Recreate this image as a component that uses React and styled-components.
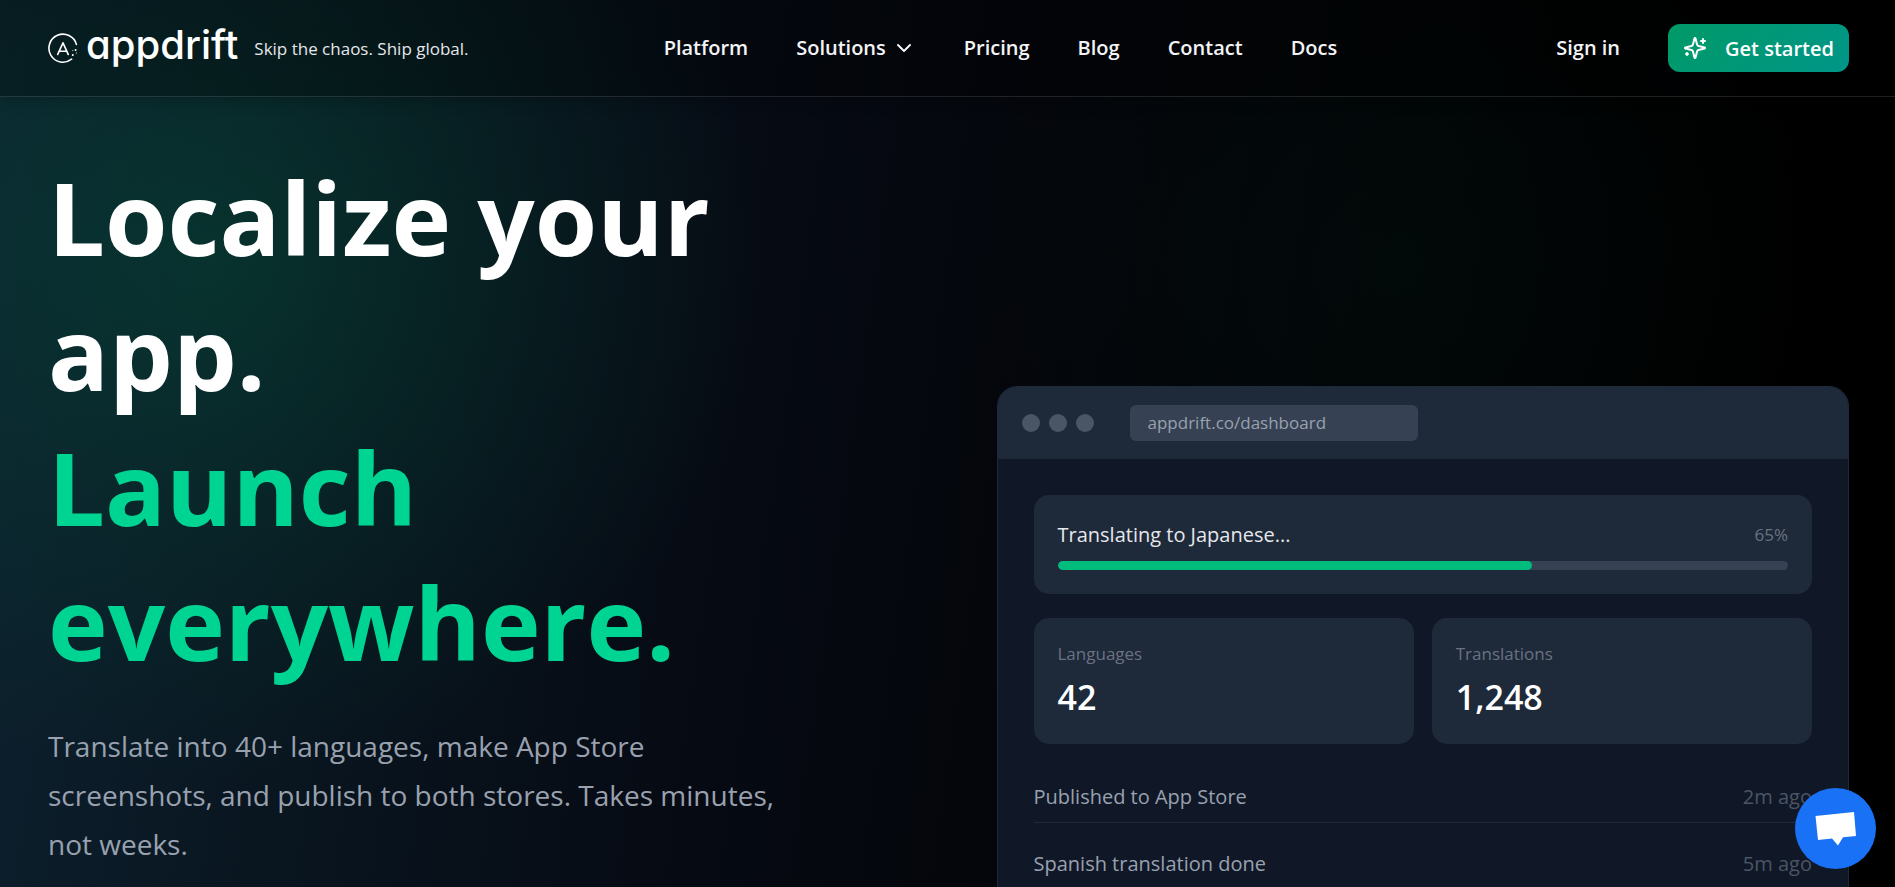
import React from "react";
import styled, { createGlobalStyle } from "styled-components";
import { ChevronDown } from "lucide-react";

const navItems = [
  { label: "Platform" },
  { label: "Solutions", menu: true },
  { label: "Pricing" },
  { label: "Blog" },
  { label: "Contact" },
  { label: "Docs" }
];

const stats = [
  { label: "Languages", value: "42" },
  { label: "Translations", value: "1,248" }
];

const activity = [
  { text: "Published to App Store", time: "2m ago" },
  { text: "Spanish translation done", time: "5m ago" }
];

const progress = 65;

const LogoMark = () => (
  <svg width="30" height="32" viewBox="0 0 30 32" fill="none" stroke="#fff" strokeLinecap="round" aria-hidden="true">
    <path d="M28.4 12.4 A14 14 0 1 0 23.6 27.2" strokeWidth="1.6" />
    <path d="M9.7 22.4 L15 10.8 L20.2 22.4 M11.6 19.2 H18" strokeWidth="1.6" strokeLinejoin="round" />
    <path d="M27.6 18 v0.1 M24.8 23 v0.1" strokeWidth="2" />
    <path d="M24.8 18.6 v0.1 M28.4 21 v0.1" strokeWidth="1" />
  </svg>
);

const SparkIcon = () => (
  <svg
    width="24"
    height="24"
    viewBox="0 0 24 24"
    fill="none"
    stroke="currentColor"
    strokeWidth="2"
    strokeLinecap="round"
    strokeLinejoin="round"
    aria-hidden="true"
  >
    <path d="M9.937 15.5A2 2 0 0 0 8.5 14.063l-6.135-1.582a.5.5 0 0 1 0-.962L8.5 9.936A2 2 0 0 0 9.937 8.5l1.582-6.135a.5.5 0 0 1 .963 0L14.063 8.5A2 2 0 0 0 15.5 9.937l6.135 1.581a.5.5 0 0 1 0 .964L15.5 14.063a2 2 0 0 0-1.437 1.437l-1.582 6.135a.5.5 0 0 1-.963 0z" />
    <path d="M20 3v4 M22 5h-4 M4 17v2 M5 18H3" />
  </svg>
);

const App = () => (
  <>
    <GlobalStyle />
    <Page>
      <Header>
        <Brand href="#">
          <LogoMark />
          <Wordmark>appdrift</Wordmark>
          <Tagline>Skip the chaos. Ship global.</Tagline>
        </Brand>
        <Nav aria-label="Main">
          {navItems.map(item =>
            item.menu ? (
              <NavButton key={item.label} type="button">
                {item.label}
                <ChevronDown size={24} strokeWidth={2} aria-hidden="true" />
              </NavButton>
            ) : (
              <NavLink key={item.label} href="#">
                {item.label}
              </NavLink>
            )
          )}
        </Nav>
        <Actions>
          <NavLink href="#">Sign in</NavLink>
          <StartButton type="button">
            <SparkIcon />
            Get started
          </StartButton>
        </Actions>
      </Header>

      <Hero>
        <Intro>
          <Title>
            Localize your app. <Accent>Launch everywhere.</Accent>
          </Title>
          <Lead>
            Translate into 40+ languages, make App Store screenshots, and publish to both stores. Takes minutes, not
            weeks.
          </Lead>
        </Intro>

        <Window>
          <WindowBar>
            <Dots>
              <Dot />
              <Dot />
              <Dot />
            </Dots>
            <Address>appdrift.co/dashboard</Address>
          </WindowBar>
          <WindowBody>
            <Panel>
              <PanelHead>
                <Task>Translating to Japanese...</Task>
                <Muted>{progress}%</Muted>
              </PanelHead>
              <Track>
                <Fill style={{ width: `${progress}%` }} />
              </Track>
            </Panel>
            <Stats>
              {stats.map(stat => (
                <Panel key={stat.label}>
                  <Muted>{stat.label}</Muted>
                  <Value>{stat.value}</Value>
                </Panel>
              ))}
            </Stats>
            <Activity>
              {activity.map(item => (
                <ActivityRow key={item.text}>
                  <span>{item.text}</span>
                  <Time>{item.time}</Time>
                </ActivityRow>
              ))}
            </Activity>
          </WindowBody>
        </Window>
      </Hero>

      <ChatButton type="button" aria-label="Open chat">
        <svg width="42" height="36" viewBox="0 0 42 36" fill="#fff" aria-hidden="true">
          <path d="M0.5 5 L39 1 L41 25 L28 26.2 L23 34.5 L17 27.6 L3 29 Z" />
        </svg>
      </ChatButton>
    </Page>
  </>
);

export default App;

const GlobalStyle = createGlobalStyle`
  *, *::before, *::after {
    box-sizing: border-box;
  }

  body {
    margin: 0;
    background: #000;
    color: #fff;
    font-family: "Segoe UI", "Open Sans", "Noto Sans", sans-serif;
  }

  a, button {
    color: inherit;
    font-family: inherit;
    text-decoration: none;
  }

  button {
    border: 0;
    cursor: pointer;
  }
`;

const Page = styled.div`
  height: 100vh;
  overflow: hidden;
  background:
    radial-gradient(ellipse 560px 520px at 210px 260px, rgba(4, 78, 56, 0.48), rgba(4, 78, 56, 0.2) 55%, transparent),
    radial-gradient(ellipse 420px 400px at 74% 30%, rgba(0, 60, 40, 0.1), transparent),
    linear-gradient(98deg, #0d2230 0%, #09151f 20%, #060a13 40%, #04060b 54%, #010203 78%, #000 92%);
`;

const Header = styled.header`
  display: flex;
  align-items: center;
  justify-content: space-between;
  height: 97px;
  padding: 0 46px 0 48px;
  border-bottom: 1px solid rgba(255, 255, 255, 0.12);
  background: rgba(0, 0, 0, 0.3);
  box-shadow: 0 4px 12px rgba(0, 0, 0, 0.2);
`;

const Brand = styled.a`
  display: flex;
  align-items: center;
  gap: 8px;
`;

const Wordmark = styled.span`
  padding-bottom: 6px;
  font-family: Inter, Lato, sans-serif;
  font-feature-settings: "cv11";
  font-size: 40px;
  font-weight: 500;
  line-height: 48px;
`;

const Tagline = styled.span`
  margin-left: 8px;
  color: #e5e7eb;
  font-size: 17px;
`;

const Nav = styled.nav`
  display: flex;
  align-items: center;
  gap: 48px;
  margin-right: 24px;
`;

const NavLink = styled.a`
  color: #f3f4f6;
  font-size: 20px;
  font-weight: 600;
  line-height: 28px;
`;

const NavButton = styled.button`
  display: flex;
  align-items: center;
  gap: 6px;
  padding: 0;
  background: none;
  color: #f3f4f6;
  font-size: 20px;
  font-weight: 600;
  line-height: 28px;
`;

const Actions = styled.div`
  display: flex;
  align-items: center;
  gap: 48px;
`;

const StartButton = styled.button`
  display: flex;
  align-items: center;
  gap: 18px;
  height: 48px;
  padding: 0 15px;
  border-radius: 12px;
  background: linear-gradient(135deg, #009966, #009689);
  font-size: 20px;
  font-weight: 600;
`;

const Hero = styled.main`
  display: grid;
  grid-template-columns: 1fr 1fr;
  gap: 96px;
  padding: 53px 46px 0 48px;
`;

const Intro = styled.section`
  min-width: 0;
`;

const Title = styled.h1`
  max-width: 720px;
  margin: 0;
  font-size: 101px;
  font-weight: 700;
  line-height: 135px;
`;

const Accent = styled.span`
  display: block;
  color: #00d492;
`;

const Lead = styled.p`
  max-width: 756px;
  margin: 32px 0 0;
  color: #99a1af;
  font-size: 28px;
  line-height: 49px;
`;

const Window = styled.section`
  margin-top: 236px;
  border: 1px solid #1e2939;
  border-radius: 20px;
  background: #101828;
  overflow: hidden;
`;

const WindowBar = styled.div`
  display: flex;
  align-items: center;
  gap: 36px;
  padding: 18px 24px;
  background: #1e2939;
`;

const Dots = styled.div`
  display: flex;
  gap: 9px;
`;

const Dot = styled.span`
  width: 18px;
  height: 18px;
  border-radius: 50%;
  background: #4a5565;
`;

const Address = styled.div`
  width: 288px;
  padding: 0 18px;
  border-radius: 6px;
  background: #364153;
  color: #99a1af;
  font-size: 17px;
  line-height: 36px;
`;

const WindowBody = styled.div`
  display: flex;
  flex-direction: column;
  gap: 24px;
  padding: 36px;
`;

const Panel = styled.div`
  padding: 24px;
  border-radius: 15px;
  background: #1e2939;
`;

const PanelHead = styled.div`
  display: flex;
  align-items: center;
  justify-content: space-between;
  margin-bottom: 10px;
  line-height: 32px;
`;

const Task = styled.span`
  color: #e5e7eb;
  font-size: 20px;
`;

const Muted = styled.div`
  color: #6a7282;
  font-size: 17px;
  line-height: 24px;
`;

const Track = styled.div`
  height: 9px;
  border-radius: 5px;
  background: #364153;
  overflow: hidden;
`;

const Fill = styled.div`
  height: 100%;
  border-radius: 5px;
  background: #00bc7d;
`;

const Stats = styled.div`
  display: grid;
  grid-template-columns: 1fr 1fr;
  gap: 18px;
`;

const Value = styled.div`
  margin-top: 9px;
  font-size: 34px;
  font-weight: 600;
  line-height: 45px;
`;

const Activity = styled.ul`
  display: flex;
  flex-direction: column;
  gap: 27px;
  margin: 15px 0 0;
  padding: 0;
  list-style: none;
`;

const ActivityRow = styled.li`
  display: flex;
  justify-content: space-between;
  padding-bottom: 12px;
  border-bottom: 1px solid #1e2939;
  color: #99a1af;
  font-size: 20px;
  line-height: 27px;
`;

const Time = styled.span`
  color: #4a5565;
`;

const ChatButton = styled.button`
  position: fixed;
  right: 19px;
  bottom: 18px;
  display: grid;
  place-items: center;
  width: 81px;
  height: 81px;
  padding: 0;
  border-radius: 50%;
  background: #1972f5;
`;
